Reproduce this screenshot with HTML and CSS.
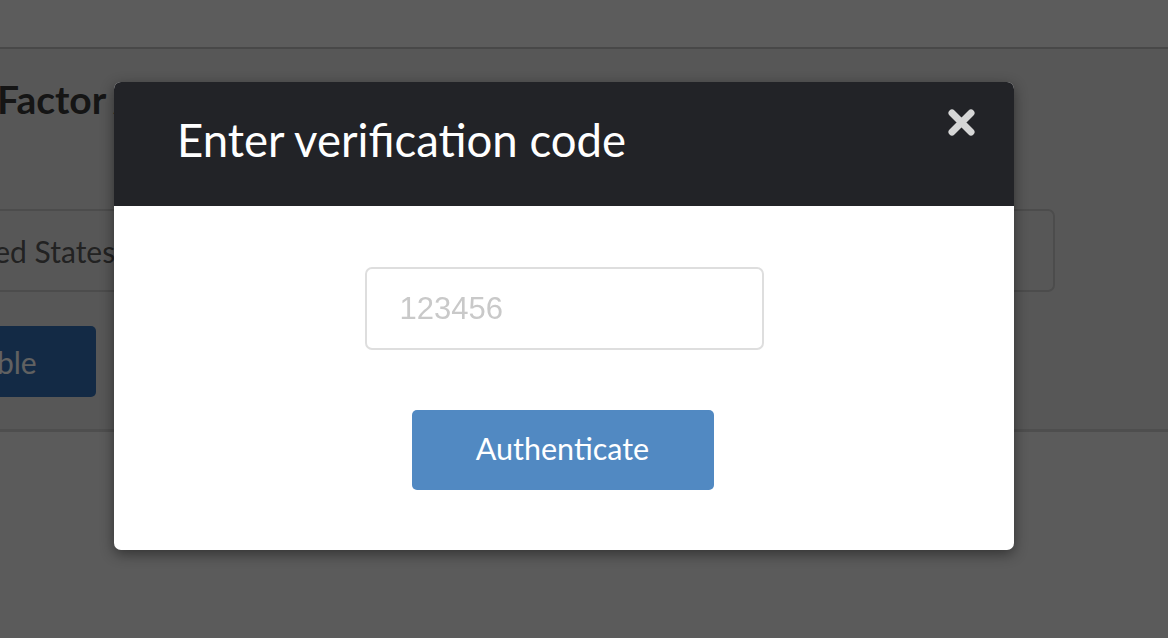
FILE: index.html
```html
<!DOCTYPE html>
<html lang="en">
<head>
<meta charset="utf-8">
<title>Two-Factor Authentication</title>
<link rel="stylesheet" href="styles.css">
</head>
<body>
<div class="page">
  <header class="topbar"></header>
  <section class="panel">
    <div class="panel-inner">
      <h2 class="panel-title">Two-Factor Authentication</h2>
      <div class="select-box">United States (+1)</div>
      <button class="enable-btn" type="button">Enable</button>
    </div>
  </section>
</div>

<div class="backdrop"></div>

<div class="modal" role="dialog" aria-labelledby="modal-title">
  <div class="modal-header">
    <h3 class="modal-title" id="modal-title">Enter verification code</h3>
    <button class="modal-close" type="button" aria-label="Close">
      <svg viewBox="0 0 27 27" width="27" height="27" aria-hidden="true">
        <path d="M4 4 L23 23 M23 4 L4 23" stroke="#d6d6d6" stroke-width="7" stroke-linecap="round" fill="none"/>
      </svg>
    </button>
  </div>
  <div class="modal-body">
    <input class="code-input" type="text" placeholder="123456">
    <button class="auth-btn" type="button">Authenticate</button>
  </div>
</div>
</body>
</html>
```

FILE: styles.css
```css
* { box-sizing: border-box; }

html, body {
  margin: 0;
  padding: 0;
  height: 100%;
}

body {
  background: #e3e3e3;
  font-family: Lato, "Open Sans", Arial, sans-serif;
  overflow: hidden;
}

.page {
  width: 100%;
}

.topbar {
  height: 49px;
  border-bottom: 2px solid #b4b4b4;
  background: #e6e6e6;
}

.panel {
  background: #dadada;
  border-bottom: 3px solid #c4c4c4;
  height: 383px;
}

.panel-inner {
  margin-left: -85px;
  margin-right: 113px;
  padding-top: 27px;
}

.panel-title {
  margin: 0 0 0 -6px;
  font-size: 39px;
  font-weight: 700;
  line-height: 46px;
  color: #353535;
  white-space: nowrap;
}

.select-box {
  margin-top: 87px;
  height: 83px;
  border: 2px solid #bdbdbd;
  border-radius: 7px;
  padding-left: 21px;
  display: flex;
  align-items: center;
  font-size: 30px;
  color: #555;
  white-space: nowrap;
}

.enable-btn {
  margin-top: 34px;
  width: 181px;
  height: 71px;
  border: 0;
  border-radius: 5px;
  background: #306aad;
  color: #f2f2f2;
  font-family: inherit;
  font-size: 30px;
  padding: 0 26px 0 0;
}

.backdrop {
  position: fixed;
  inset: 0;
  background: rgba(0, 0, 0, 0.6);
}

.modal {
  position: absolute;
  left: 114px;
  top: 82px;
  width: 900px;
  border-radius: 7px;
  background: #fff;
  box-shadow: 0 4px 14px rgba(0, 0, 0, 0.45);
  overflow: hidden;
}

.modal-header {
  position: relative;
  height: 124px;
  background: #222327;
  padding-left: 63px;
  padding-top: 31px;
}

.modal-title {
  margin: 0;
  font-size: 45.5px;
  font-weight: 400;
  line-height: 54px;
  color: #ffffff;
}

.modal-close {
  position: absolute;
  top: 27px;
  right: 39px;
  width: 27px;
  height: 27px;
  padding: 0;
  border: 0;
  background: none;
  display: block;
}

.modal-close svg { display: block; }

.modal-body {
  height: 344px;
  padding-top: 61px;
  display: flex;
  flex-direction: column;
  align-items: center;
}

.code-input {
  width: 399px;
  height: 83px;
  border: 2px solid #dedede;
  border-radius: 7px;
  padding: 0 0 0 33px;
  font-family: "Liberation Sans", Arial, sans-serif;
  font-size: 31px;
  color: #333;
  outline: none;
}

.code-input::placeholder { color: #c9c9c9; }

.auth-btn {
  margin-top: 60px;
  margin-left: -3px;
  width: 302px;
  height: 80px;
  border: 0;
  border-radius: 5px;
  background: #5189c2;
  color: #ffffff;
  font-family: inherit;
  font-size: 30.5px;
  padding: 0 0 4px;
}
```
